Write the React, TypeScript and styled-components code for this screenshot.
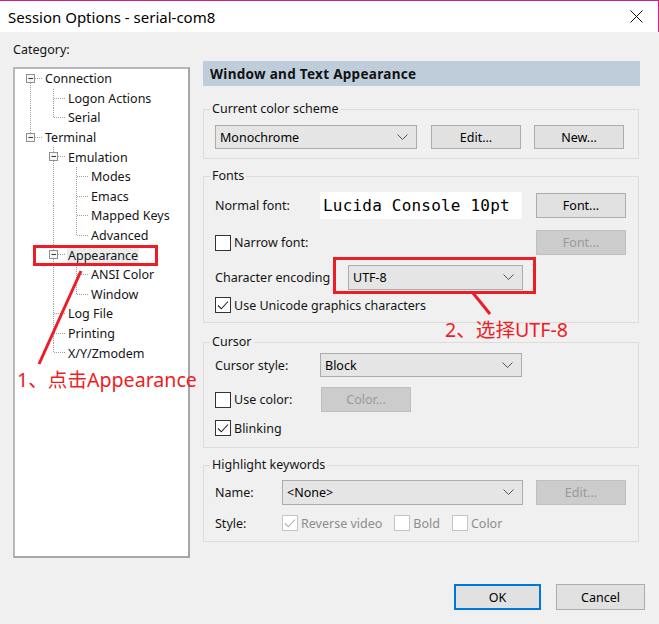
import { FC } from "react";
import styled, { createGlobalStyle } from "styled-components";

const GlobalStyle = createGlobalStyle`
    html, body {
        margin: 0;
        padding: 0;
        background: #f0f0f0;
    }
`;

const UI_FONT = `"Noto Sans", "Noto Sans CJK SC", sans-serif`;
const RED = "#ee1c24";

type TreeItem = {
    label: string;
    level: number;
    expander?: boolean;
    last?: boolean;
    first?: boolean;
    anc: boolean[];
    selected?: boolean;
};

const TREE: TreeItem[] = [
    { label: "Connection", level: 0, expander: true, first: true, anc: [] },
    { label: "Logon Actions", level: 1, anc: [true] },
    { label: "Serial", level: 1, last: true, anc: [true] },
    { label: "Terminal", level: 0, expander: true, last: true, anc: [] },
    { label: "Emulation", level: 1, expander: true, anc: [false] },
    { label: "Modes", level: 2, anc: [false, true] },
    { label: "Emacs", level: 2, anc: [false, true] },
    { label: "Mapped Keys", level: 2, anc: [false, true] },
    { label: "Advanced", level: 2, last: true, anc: [false, true] },
    { label: "Appearance", level: 1, expander: true, selected: true, anc: [false] },
    { label: "ANSI Color", level: 2, anc: [false, true] },
    { label: "Window", level: 2, last: true, anc: [false, true] },
    { label: "Log File", level: 1, anc: [false] },
    { label: "Printing", level: 1, anc: [false] },
    { label: "X/Y/Zmodem", level: 1, last: true, anc: [false] },
];

const Window = styled.div`
    position: relative;
    width: 659px;
    height: 624px;
    background: #f0f0f0;
    overflow: hidden;
    font-family: ${UI_FONT};
    font-size: 12.5px;
    color: #141414;
`;

const TitleBar = styled.div`
    height: 31px;
    background: #fff;
    border-top: 1px solid #cf2087;
    border-right: 1px solid #cf2087;
    display: flex;
    align-items: center;
    justify-content: space-between;
    padding: 0 15px 0 8px;
`;

const Title = styled.div`
    font-size: 15px;
    color: #000;
`;

const Body = styled.div`
    display: grid;
    grid-template-columns: 177px 437px;
    column-gap: 13px;
    padding-left: 13px;
`;

const LeftCol = styled.div`
    display: flex;
    flex-direction: column;
`;

const CategoryLabel = styled.div`
    margin-top: 10px;
    line-height: 16px;
`;

const TreeBox = styled.div`
    margin-top: 9px;
    height: 487px;
    background: #fff;
    border: 2px solid #abadb3;
    border-color: #b5b7bb #a4a6aa #a4a6aa #b5b7bb;
`;

const TreeRow = styled.div`
    display: flex;
    align-items: center;
    height: 19.6px;
    padding-left: 4px;
`;

const TreeLabel = styled.span<{ $selected?: boolean }>`
    margin-left: 2px;
    padding: 0 1px;
    line-height: 17px;
    background: ${p => (p.$selected ? "#ececec" : "transparent")};
`;

const RightCol = styled.div`
    display: flex;
    flex-direction: column;
    padding-top: 29px;
`;

const Header = styled.div`
    height: 25px;
    background: #bfcddb;
    display: flex;
    align-items: center;
    padding-left: 7px;
    font-weight: bold;
    font-size: 13.5px;
    letter-spacing: 0.3px;
    color: #111;
`;

const Group = styled.fieldset<{ $top: number; $bottom: number }>`
    margin: ${p => p.$top}px 0 0 0;
    width: 436px;
    box-sizing: border-box;
    min-width: 0;
    border: 1px solid #dcdcdc;
    padding: 0 12px ${p => p.$bottom}px 11px;
`;

const Legend = styled.legend`
    padding: 0 2px;
    margin-left: -5px;
    line-height: 16px;
`;

const Row = styled.div<{ $top: number; $h: number }>`
    display: flex;
    align-items: center;
    margin-top: ${p => p.$top}px;
    height: ${p => p.$h}px;
`;

const Label = styled.span<{ $w?: number; $disabled?: boolean }>`
    width: ${p => (p.$w ? `${p.$w}px` : "auto")};
    flex: none;
    color: ${p => (p.$disabled ? "#8d8d8d" : "inherit")};
    white-space: nowrap;
`;

const SelectBox = styled.div<{ $w: number }>`
    width: ${p => p.$w}px;
    height: 100%;
    box-sizing: border-box;
    flex: none;
    background: #e5e5e5;
    border: 1px solid #acacac;
    display: flex;
    align-items: center;
    justify-content: space-between;
    padding: 0 8px 0 4px;
    color: #000;
`;

const Button = styled.div<{ $w: number; $h?: number; $disabled?: boolean; $ml?: number; $default?: boolean }>`
    width: ${p => p.$w}px;
    height: ${p => (p.$h ? `${p.$h}px` : "100%")};
    margin-left: ${p => (p.$ml === undefined ? "auto" : `${p.$ml}px`)};
    box-sizing: border-box;
    flex: none;
    display: flex;
    align-items: center;
    justify-content: center;
    background: ${p => (p.$disabled ? "#cccccc" : "#e1e1e1")};
    border: ${p => (p.$default ? "2px solid #0078d7" : p.$disabled ? "1px solid #bfbfbf" : "1px solid #adadad")};
    color: ${p => (p.$disabled ? "#9a9a9a" : "#000")};
    font-size: 12.5px;
`;

const FontBox = styled.div`
    width: 202px;
    height: 27px;
    flex: none;
    box-sizing: border-box;
    background: #fff;
    display: flex;
    align-items: center;
    padding-left: 3px;
    font-family: "DejaVu Sans Mono", "Liberation Mono", monospace;
    font-size: 16px;
    letter-spacing: 0.2px;
    color: #000;
`;

const CheckItem = styled.label<{ $mr?: number }>`
    display: flex;
    align-items: center;
    gap: 3px;
    margin-right: ${p => p.$mr ?? 0}px;
    flex: none;
`;

const Box = styled.span<{ $disabled?: boolean }>`
    width: 16px;
    height: 16px;
    box-sizing: border-box;
    background: #fff;
    border: 1px solid ${p => (p.$disabled ? "#c4c4c4" : "#333")};
    display: flex;
    align-items: center;
    justify-content: center;
`;

const Footer = styled.div`
    display: flex;
    justify-content: flex-end;
    gap: 15px;
    padding-right: 14px;
    margin-top: 26px;
    height: 26px;
`;

const Overlay = styled.div<{ $x: number; $y: number }>`
    position: absolute;
    left: ${p => p.$x}px;
    top: ${p => p.$y}px;
`;

const RedFrame = styled(Overlay) <{ $w: number; $h: number }>`
    width: ${p => p.$w}px;
    height: ${p => p.$h}px;
    box-sizing: border-box;
    border: 3px solid ${RED};
`;

const Note = styled(Overlay)`
    color: ${RED};
    font-family: "Noto Sans", "Noto Sans CJK SC", sans-serif;
    font-size: 19.6px;
    line-height: 22px;
    white-space: nowrap;
`;

const Lines = styled.svg`
    position: absolute;
    left: 0;
    top: 0;
    pointer-events: none;
`;

const Connector: FC<{ top?: boolean; bottom?: boolean; horiz?: boolean; expander?: boolean }> = ({ top, bottom, horiz, expander }) => (
    <svg width="23" height="19.6" viewBox="0 0 23 19.6" style={{ flex: "none", display: "block" }}>
        {top && <line x1="11.5" y1="0" x2="11.5" y2="10" stroke="#a0a0a0" strokeDasharray="1 1" />}
        {bottom && <line x1="11.5" y1="10" x2="11.5" y2="19.6" stroke="#a0a0a0" strokeDasharray="1 1" />}
        {horiz && <line x1="12" y1="9.5" x2="23" y2="9.5" stroke="#a0a0a0" strokeDasharray="1 1" />}
        {expander && (
            <>
                <rect x="7.5" y="5.5" width="8" height="8" fill="#f4f4f4" stroke="#919191" />
                <line x1="9.5" y1="9.5" x2="14" y2="9.5" stroke="#333" />
            </>
        )}
    </svg>
);

const Check: FC<{ color?: string }> = ({ color = "#222" }) => (
    <svg width="12" height="12" viewBox="0 0 12 12">
        <path d="M1 6.5 L4.3 9.8 L11 2.5" fill="none" stroke={color} strokeWidth="1.1" />
    </svg>
);

const Chevron: FC = () => (
    <svg width="11" height="7" viewBox="0 0 11 7">
        <path d="M0.5 0.5 L5.5 5.5 L10.5 0.5" fill="none" stroke="#555" strokeWidth="1" />
    </svg>
);

const CheckBox: FC<{ label: string; checked?: boolean; disabled?: boolean; mr?: number }> = ({ label, checked, disabled, mr }) => (
    <CheckItem $mr={mr}>
        <Box $disabled={disabled}>{checked && <Check color={disabled ? "#b0b0b0" : "#222"} />}</Box>
        <Label $disabled={disabled}>{label}</Label>
    </CheckItem>
);

const Select: FC<{ value: string; w: number }> = ({ value, w }) => (
    <SelectBox $w={w}>
        <span>{value}</span>
        <Chevron />
    </SelectBox>
);

const TreeNode: FC<{ item: TreeItem }> = ({ item }) => (
    <TreeRow>
        {item.anc.map((cont, i) => (
            <Connector key={i} top={cont} bottom={cont} />
        ))}
        <Connector top={!item.first} bottom={!item.last} horiz expander={item.expander} />
        <TreeLabel $selected={item.selected}>{item.label}</TreeLabel>
    </TreeRow>
);

const App: FC = () => {
    return (
        <Window>
            <GlobalStyle />
            <TitleBar>
                <Title>Session Options - serial-com8</Title>
                <svg width="13" height="13" viewBox="0 0 13 13">
                    <path d="M0.5 0.5 L12.5 12.5 M12.5 0.5 L0.5 12.5" stroke="#111" strokeWidth="1" />
                </svg>
            </TitleBar>
            <Body>
                <LeftCol>
                    <CategoryLabel>Category:</CategoryLabel>
                    <TreeBox>
                        {TREE.map(item => (
                            <TreeNode key={item.label} item={item} />
                        ))}
                    </TreeBox>
                </LeftCol>
                <RightCol>
                    <Header>Window and Text Appearance</Header>

                    <Group $top={15} $bottom={9}>
                        <Legend>Current color scheme</Legend>
                        <Row $top={8} $h={24}>
                            <Select value="Monochrome" w={202} />
                            <Button $w={90} $ml={14}>Edit...</Button>
                            <Button $w={90} $ml={13}>New...</Button>
                        </Row>
                    </Group>

                    <Group $top={9} $bottom={8}>
                        <Legend>Fonts</Legend>
                        <Row $top={8} $h={27}>
                            <Label $w={105}>Normal font:</Label>
                            <FontBox>Lucida Console 10pt</FontBox>
                            <Button $w={90} $h={25}>Font...</Button>
                        </Row>
                        <Row $top={11} $h={25}>
                            <CheckBox label="Narrow font:" />
                            <Button $w={90} $disabled>Font...</Button>
                        </Row>
                        <Row $top={10} $h={25}>
                            <Label $w={133}>Character encoding</Label>
                            <Select value="UTF-8" w={175} />
                        </Row>
                        <Row $top={6} $h={18}>
                            <CheckBox label="Use Unicode graphics characters" checked />
                        </Row>
                    </Group>

                    <Group $top={11} $bottom={11}>
                        <Legend>Cursor</Legend>
                        <Row $top={3} $h={24}>
                            <Label $w={105}>Cursor style:</Label>
                            <Select value="Block" w={202} />
                        </Row>
                        <Row $top={10} $h={25}>
                            <Label $w={105}>
                                <CheckBox label="Use color:" />
                            </Label>
                            <Button $w={90} $ml={1} $disabled>Color...</Button>
                        </Row>
                        <Row $top={8} $h={16}>
                            <CheckBox label="Blinking" checked />
                        </Row>
                    </Group>

                    <Group $top={9} $bottom={8}>
                        <Legend>Highlight keywords</Legend>
                        <Row $top={7} $h={25}>
                            <Label $w={67}>Name:</Label>
                            <Select value="<None>" w={241} />
                            <Button $w={90} $disabled>Edit...</Button>
                        </Row>
                        <Row $top={8} $h={20}>
                            <Label $w={67}>Style:</Label>
                            <CheckBox label="Reverse video" checked disabled mr={12} />
                            <CheckBox label="Bold" disabled mr={12} />
                            <CheckBox label="Color" disabled />
                        </Row>
                    </Group>
                </RightCol>
            </Body>
            <Footer>
                <Button $w={87} $ml={0} $default>OK</Button>
                <Button $w={89} $ml={0}>Cancel</Button>
            </Footer>

            <RedFrame $x={33} $y={245} $w={125} $h={21} />
            <RedFrame $x={333} $y={257} $w={203} $h={37} />
            <Lines width="659" height="624">
                <line x1="81" y1="271" x2="39" y2="364" stroke={RED} strokeWidth="3" />
                <line x1="473" y1="293" x2="490" y2="314" stroke={RED} strokeWidth="3" />
            </Lines>
            <Note $x={17} $y={369}>1、点击Appearance</Note>
            <Note $x={445} $y={319}>2、选择UTF-8</Note>
        </Window>
    );
};

export default App;
